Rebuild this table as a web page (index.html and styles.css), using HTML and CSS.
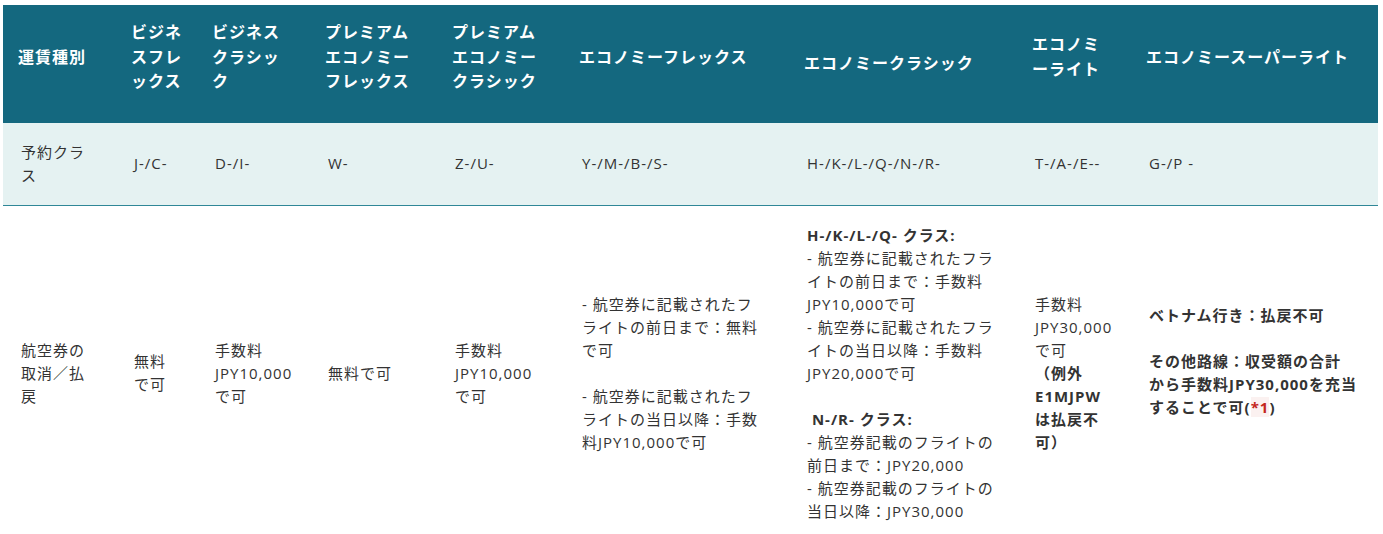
FILE: index.html
```html
<!DOCTYPE html>
<html lang="ja">
<head>
<meta charset="utf-8">
<title>運賃種別</title>
<link rel="stylesheet" href="styles.css">
</head>
<body>
<table class="fares">
  <colgroup>
    <col class="c1"><col class="c2"><col class="c3"><col class="c4"><col class="c5">
    <col class="c6"><col class="c7"><col class="c8"><col class="c9">
  </colgroup>
  <thead>
    <tr>
      <th>運賃種別</th>
      <th>ビジネ<br>スフレ<br>ックス</th>
      <th>ビジネス<br>クラシッ<br>ク</th>
      <th>プレミアム<br>エコノミー<br>フレックス</th>
      <th>プレミアム<br>エコノミー<br>クラシック</th>
      <th>エコノミーフレックス</th>
      <th class="shift">エコノミークラシック</th>
      <th>エコノミ<br>ーライト</th>
      <th>エコノミースーパーライト</th>
    </tr>
  </thead>
  <tbody>
    <tr class="classes">
      <td>予約クラ<br>ス</td>
      <td>J-/C-</td>
      <td>D-/I-</td>
      <td>W-</td>
      <td>Z-/U-</td>
      <td>Y-/M-/B-/S-</td>
      <td>H-/K-/L-/Q-/N-/R-</td>
      <td>T-/A-/E--</td>
      <td>G-/P -</td>
    </tr>
    <tr class="refund">
      <td>航空券の<br>取消／払<br>戻</td>
      <td>無料<br>で可</td>
      <td>手数料<br>JPY10,000<br>で可</td>
      <td>無料で可</td>
      <td>手数料<br>JPY10,000<br>で可</td>
      <td>- 航空券に記載されたフ<br>ライトの前日まで：無料<br>で可<br><br>- 航空券に記載されたフ<br>ライトの当日以降：手数<br>料JPY10,000で可</td>
      <td><b>H-/K-/L-/Q- クラス:</b><br>- 航空券に記載されたフラ<br>イトの前日まで：手数料<br>JPY10,000で可<br>- 航空券に記載されたフラ<br>イトの当日以降：手数料<br>JPY20,000で可<br><br><b>&nbsp;N-/R- クラス:</b><br>- 航空券記載のフライトの<br>前日まで：JPY20,000<br>- 航空券記載のフライトの<br>当日以降：JPY30,000</td>
      <td>手数料<br>JPY30,000<br>で可<br><b>（例外<br>E1MJPW<br>は払戻不<br>可）</b></td>
      <td class="notes">
        <p><b>ベトナム行き：払戻不可</b></p>
        <p><b>その他路線：収受額の合計<br>から手数料JPY30,000を充当<br>することで可(<span class="ref">*1</span>)</b></p>
      </td>
    </tr>
  </tbody>
</table>
</body>
</html>
```

FILE: styles.css
```css
html, body {
  background: #ffffff;
}

body {
  margin: 5px 0 0 3px;
  font-family: "Open Sans", "Noto Sans CJK JP", sans-serif;
  color: #333333;
}

.fares {
  width: 1375px;
  border-collapse: collapse;
  table-layout: fixed;
}

.c1 { width: 113px; }
.c2 { width: 81px; }
.c3 { width: 113px; }
.c4 { width: 127px; }
.c5 { width: 127px; }
.c6 { width: 225px; }
.c7 { width: 228px; }
.c8 { width: 114px; }
.c9 { width: 247px; }

.fares th {
  background: #14687f;
  color: #ffffff;
  font-size: 16px;
  font-weight: 700;
  letter-spacing: 1px;
  line-height: 24.5px;
  text-align: left;
  vertical-align: middle;
  padding: 15px 4px 29px 15px;
  white-space: nowrap;
}

.fares th.shift {
  padding-top: 27px;
}

.fares td {
  font-size: 15px;
  letter-spacing: 1px;
  line-height: 23px;
  text-align: left;
  vertical-align: middle;
  padding: 18px 4px 18px 18px;
  white-space: nowrap;
}

.fares td b {
  font-weight: 700;
}

.classes td {
  background: #e5f2f2;
  border-bottom: 1px solid #2f8797;
}

.refund td {
  background: #ffffff;
}

.notes p {
  margin: 0 0 23px 0;
}

.ref {
  color: #c4261d;
  background: #fbf1f0;
}
```
